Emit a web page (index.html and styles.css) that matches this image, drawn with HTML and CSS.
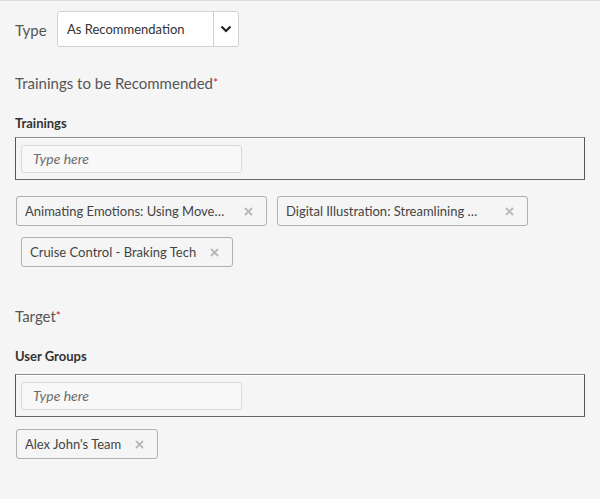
FILE: index.html
```html
<!DOCTYPE html>
<html>
<head>
<meta charset="utf-8">
<link rel="stylesheet" href="styles.css">
</head>
<body>
<div class="page">
  <div class="type-row">
    <span class="type-label">Type</span>
    <div class="select">
      <span class="select-value">As Recommendation</span>
      <span class="select-btn">
        <svg width="12" height="8" viewBox="0 0 12 8"><path d="M1.5 1.5 L6 6 L10.5 1.5" fill="none" stroke="#222" stroke-width="2.2"/></svg>
      </span>
    </div>
  </div>

  <div class="section-title">Trainings to be Recommended<span class="req">*</span></div>
  <div class="field-label">Trainings</div>
  <div class="input-box">
    <div class="text-input">Type here</div>
  </div>
  <div class="chips">
    <div class="chip w251"><span class="chip-text">Animating Emotions: Using Move…</span><svg class="x" width="9" height="9" viewBox="0 0 9 9"><path d="M1 1 L8 8 M8 1 L1 8" stroke="#b8b8b8" stroke-width="1.8"/></svg></div>
    <div class="chip w251"><span class="chip-text">Digital Illustration: Streamlining …</span><svg class="x" width="9" height="9" viewBox="0 0 9 9"><path d="M1 1 L8 8 M8 1 L1 8" stroke="#b8b8b8" stroke-width="1.8"/></svg></div>
    <div class="chip chip-indent"><span class="chip-text">Cruise Control - Braking Tech</span><svg class="x" width="9" height="9" viewBox="0 0 9 9"><path d="M1 1 L8 8 M8 1 L1 8" stroke="#b8b8b8" stroke-width="1.8"/></svg></div>
  </div>

  <div class="section-title target">Target<span class="req">*</span></div>
  <div class="field-label">User Groups</div>
  <div class="input-box second">
    <div class="text-input">Type here</div>
  </div>
  <div class="chips chips-second">
    <div class="chip"><span class="chip-text">Alex John's Team</span><svg class="x" width="9" height="9" viewBox="0 0 9 9"><path d="M1 1 L8 8 M8 1 L1 8" stroke="#b8b8b8" stroke-width="1.8"/></svg></div>
  </div>
</div>
</body>
</html>
```
FILE: styles.css
```css
html, body {
  margin: 0;
  padding: 0;
  background: #f5f5f5;
}
body {
  border-top: 1px solid #dcdcdc;
  font-family: Lato, "Open Sans", sans-serif;
  color: #333;
  height: 498px;
}
.page {
  padding: 10px 15px 0 15px;
}
.type-row {
  display: flex;
  align-items: center;
}
.type-label {
  font-size: 15px;
  color: #555;
  width: 42px;
  padding-top: 2px;
}
.select {
  display: flex;
  width: 180px;
  height: 34px;
  border: 1px solid #d2d2d2;
  border-radius: 3px;
  background: #fff;
}
.select-value {
  flex: 1;
  font-size: 13px;
  color: #333;
  padding-left: 9px;
  line-height: 34px;
}
.select-btn {
  width: 24px;
  border-left: 1px solid #cfcfcf;
  display: flex;
  align-items: center;
  justify-content: center;
}
.section-title {
  font-size: 15px;
  color: #555;
  margin-top: 26px;
  line-height: 20px;
}
.req {
  color: #d0202a;
  font-size: 12px;
  vertical-align: 2px;
}
.target {
  margin-top: 39px;
}
.field-label {
  font-size: 13px;
  font-weight: bold;
  color: #333;
  margin-top: 21px;
  line-height: 18px;
}
.input-box {
  margin-top: 5px;
  height: 41px;
  border: 1px solid #555;
  border-top-color: #8e8e8e;
  border-bottom-color: #666;
  box-shadow: inset 0 1px 0 #fff;
  display: flex;
  align-items: center;
  padding-left: 5px;
}
.input-box.second {
  margin-top: 9px;
}
.text-input {
  width: 208px;
  height: 26px;
  border: 1px solid #dadada;
  border-radius: 3px;
  background: #f8f8f8;
  font-style: italic;
  font-size: 14px;
  color: #6b6b6b;
  line-height: 26px;
  padding-left: 11px;
}
.chips {
  display: flex;
  flex-wrap: wrap;
  column-gap: 10px;
  row-gap: 11px;
  margin-top: 16px;
  padding-left: 1px;
}
.chips.chips-second {
  margin-top: 12px;
}
.chip {
  display: flex;
  align-items: center;
  height: 28px;
  border: 1px solid #b0b0b0;
  border-radius: 3px;
  background: #f5f5f5;
  padding: 0 13px 0 8px;
  font-size: 13px;
  color: #444;
  box-sizing: content-box;
}
.w251 {
  width: 228px;
}
.chip-indent {
  margin-left: 5px;
}
.chip-text {
  flex: 1;
  white-space: nowrap;
  overflow: hidden;
}
.x {
  margin-left: 14px;
  flex: none;
}
```
